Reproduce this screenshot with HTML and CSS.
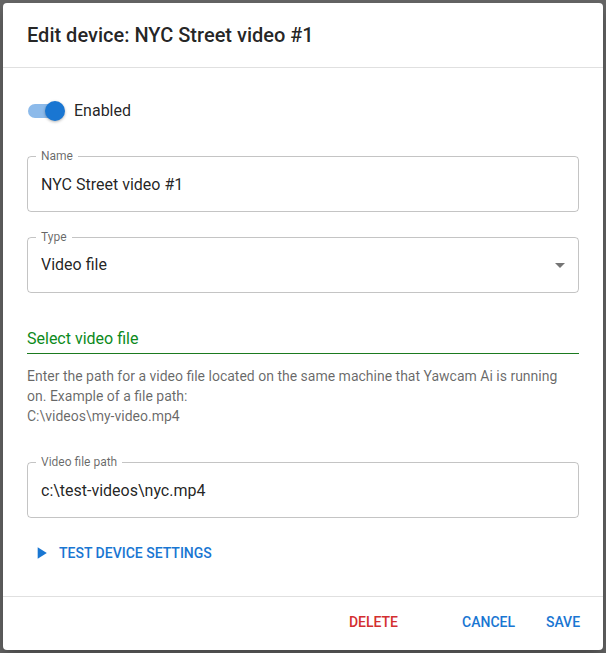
FILE: index.html
```html
<!DOCTYPE html>
<html lang="en">
<head>
<meta charset="utf-8">
<meta name="viewport" content="width=device-width, initial-scale=1">
<title>Edit device</title>
<link rel="stylesheet" href="styles.css">
</head>
<body>
<form class="dialog" role="dialog" aria-labelledby="dialog-title">
  <h2 class="dialog-title" id="dialog-title">Edit device: NYC Street video #1</h2>
  <div class="dialog-content">
    <label class="switch-row" for="enabled">
      <input class="switch" type="checkbox" id="enabled" checked>
      <span>Enabled</span>
    </label>
    <div class="field">
      <label class="field-label" for="name">Name</label>
      <input class="field-control" type="text" id="name" value="NYC Street video #1">
    </div>
    <div class="field">
      <label class="field-label" for="type">Type</label>
      <select class="field-control" id="type">
        <option>Video file</option>
      </select>
      <svg class="field-arrow" viewBox="0 0 24 24" aria-hidden="true"><path d="M7 10l5 5 5-5z"/></svg>
    </div>
    <h3 class="section-title">Select video file</h3>
    <p class="help">Enter the path for a video file located on the same machine that Yawcam Ai is running on. Example of a file path:<br>C:\videos\my-video.mp4</p>
    <div class="field">
      <label class="field-label" for="path">Video file path</label>
      <input class="field-control" type="text" id="path" value="c:\test-videos\nyc.mp4">
    </div>
    <button class="button button-test" type="button">
      <svg class="button-icon" viewBox="0 0 24 24" aria-hidden="true"><path d="M8 5v14l11-7z"/></svg>
      Test device settings
    </button>
  </div>
  <div class="dialog-actions">
    <button class="button button-delete" type="button">Delete</button>
    <button class="button" type="button">Cancel</button>
    <button class="button" type="button">Save</button>
  </div>
</form>
</body>
</html>
```

FILE: styles.css
```css
* {
  box-sizing: border-box;
}

body {
  margin: 0;
  padding: 3px;
  background: #666;
  color: rgba(0, 0, 0, 0.87);
  font: 400 16px/24px Roboto, sans-serif;
}

.dialog {
  display: flex;
  flex-direction: column;
  background: #fff;
  border-radius: 4px;
  box-shadow: 0 8px 16px rgba(0, 0, 0, 0.3);
}

.dialog-title {
  margin: 0;
  padding: 16px 24px;
  font-size: 20px;
  font-weight: 500;
  line-height: 32px;
}

.dialog-content {
  display: flex;
  flex-direction: column;
  padding: 24px 24px 25px;
  border: solid rgba(0, 0, 0, 0.12);
  border-width: 1px 0;
}

.switch-row {
  display: flex;
  align-items: center;
  align-self: flex-start;
  gap: 12px;
  height: 38px;
  margin-bottom: 26px;
}

.switch {
  appearance: none;
  position: relative;
  width: 34px;
  height: 14px;
  margin: 0 0 0 1px;
  border-radius: 7px;
  background: #8cbaea;
}

.switch::before {
  content: "";
  position: absolute;
  top: -3px;
  left: -3px;
  width: 20px;
  height: 20px;
  border-radius: 50%;
  background: #fff;
  box-shadow: 0 1px 3px rgba(0, 0, 0, 0.3);
}

.switch:checked::before {
  left: 17px;
  background: #1976d2;
}

.field {
  position: relative;
  margin-bottom: 25px;
}

.field-label {
  position: absolute;
  top: -8px;
  left: 9px;
  padding: 0 5px;
  background: #fff;
  color: rgba(0, 0, 0, 0.6);
  font-size: 12px;
  line-height: 16px;
}

.field-control {
  appearance: none;
  display: block;
  width: 100%;
  height: 56px;
  padding: 0 13px;
  border: 1px solid rgba(0, 0, 0, 0.23);
  border-radius: 4px;
  background: transparent;
  color: inherit;
  font: inherit;
}

.field-arrow {
  position: absolute;
  top: 16px;
  right: 7px;
  width: 24px;
  height: 24px;
  fill: rgba(0, 0, 0, 0.54);
  pointer-events: none;
}

.section-title {
  margin: 9px 0 12px;
  padding-bottom: 2px;
  border-bottom: 1px solid #1b7a1f;
  color: #0c8a1c;
  font-size: 16px;
  font-weight: 400;
}

.help {
  margin: 0 0 36px;
  color: rgba(0, 0, 0, 0.6);
  font-size: 14px;
  line-height: 20px;
}

.button {
  display: flex;
  align-items: center;
  justify-content: center;
  min-width: 64px;
  padding: 6px 8px;
  border: 0;
  border-radius: 4px;
  background: transparent;
  color: #1976d2;
  font: 500 14px/24px Roboto, sans-serif;
  text-transform: uppercase;
  cursor: pointer;
}

.button-test {
  align-self: flex-start;
  gap: 8px;
  margin-top: -8px;
  padding-left: 4px;
}

.button-icon {
  width: 20px;
  height: 20px;
  fill: currentColor;
}

.dialog-actions {
  display: flex;
  justify-content: flex-end;
  gap: 8px;
  padding: 7px 8px 10px;
}

.button-delete {
  margin-right: 40px;
  color: #d32f2f;
}
```
